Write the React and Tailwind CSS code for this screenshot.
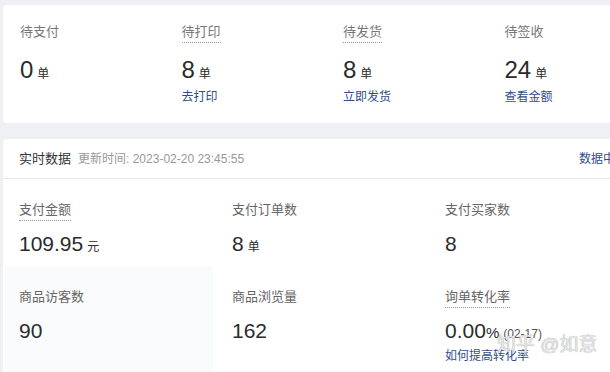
import React from "react";

const font = { fontFamily: '"Liberation Sans", "Noto Sans CJK SC", sans-serif' };

function TopCol({ label, num, link, dotted }) {
  return (
    <div className="w-[161.5px] shrink-0 flex flex-col items-start">
      <div
        className={`text-[13px] leading-[20px] text-[#777] ${dotted ? "border-b border-dotted border-[#999]" : "border-b border-transparent"}`}
      >
        {label}
      </div>
      <div className="mt-[12px] h-[30px] flex items-baseline text-[#2b2b2b]">
        <span className="text-[24px] leading-[30px] font-medium">{num}</span>
        <span className="ml-[4px] text-[12px]">单</span>
      </div>
      {link ? (
        <div className="mt-[3px] text-[12px] leading-[18px] text-[#2f4e8c]">{link}</div>
      ) : null}
    </div>
  );
}

function Stat({ label, dotted, children, highlight, link }) {
  return (
    <div className={`pl-[14px] pt-[21px] ${highlight ? "bg-[#fafbfc]" : ""}`}>
      <div className="flex">
        <div
          className={`text-[13px] leading-[20px] text-[#666] ${dotted ? "border-b border-dotted border-[#999]" : "border-b border-transparent"}`}
        >
          {label}
        </div>
      </div>
      <div className="mt-[9px] h-[28px] flex items-baseline text-[#2b2b2b]">{children}</div>
      {link ? (
        <div className="mt-[2px] text-[12px] leading-[18px] text-[#2f4e8c]">{link}</div>
      ) : null}
    </div>
  );
}

export default function App() {
  return (
    <div className="w-[610px] h-[372px] overflow-hidden bg-[#eff0f4] relative" style={font}>
      <div className="ml-[3px] mt-[5px] w-[640px] h-[118px] bg-white rounded-[4px] pl-[17px] pt-[17px] flex">
        <TopCol label="待支付" num="0" />
        <TopCol label="待打印" num="8" link="去打印" dotted />
        <TopCol label="待发货" num="8" link="立即发货" dotted />
        <TopCol label="待签收" num="24" link="查看金额" />
      </div>

      <div className="ml-[3px] mt-[16px] w-[640px] h-[240px] bg-white rounded-[4px]">
        <div className="h-[40px] border-b border-[#e6e8eb] flex items-center pl-[16px] pr-[16px]">
          <span className="text-[13px] text-[#333]">实时数据</span>
          <span className="ml-[7px] text-[12px] text-[#999]">更新时间: 2023-02-20 23:45:55</span>
          <span className="ml-auto text-[12px] text-[#2f4e8c] whitespace-nowrap">数据中心</span>
        </div>
        <div className="grid grid-cols-[208px_208px_208px] gap-x-[5px] grid-rows-[87px_110px] pl-[2px]">
          <Stat label="支付金额" dotted>
            <span className="text-[21px] leading-[28px] font-medium">109.95</span>
            <span className="ml-[4px] text-[12px]">元</span>
          </Stat>
          <Stat label="支付订单数">
            <span className="text-[21px] leading-[28px] font-medium">8</span>
            <span className="ml-[4px] text-[12px]">单</span>
          </Stat>
          <Stat label="支付买家数">
            <span className="text-[21px] leading-[28px] font-medium">8</span>
          </Stat>
          <Stat label="商品访客数" highlight>
            <span className="text-[21px] leading-[28px] font-medium">90</span>
          </Stat>
          <Stat label="商品浏览量">
            <span className="text-[21px] leading-[28px] font-medium">162</span>
          </Stat>
          <Stat label="询单转化率" dotted link="如何提高转化率">
            <span className="text-[21px] leading-[28px] font-medium">0.00</span>
            <span className="text-[15px]">%</span>
            <span className="ml-[4px] text-[12px] text-[#555]">(02-17)</span>
          </Stat>
        </div>
      </div>

      <div
        className="absolute left-[497px] top-[333px] text-[19px] leading-[24px] text-[#e4e4e4] whitespace-nowrap"
        style={{ textShadow: "0 0 1px #9a9a9a" }}
      >
        知乎 @如意
      </div>
    </div>
  );
}
